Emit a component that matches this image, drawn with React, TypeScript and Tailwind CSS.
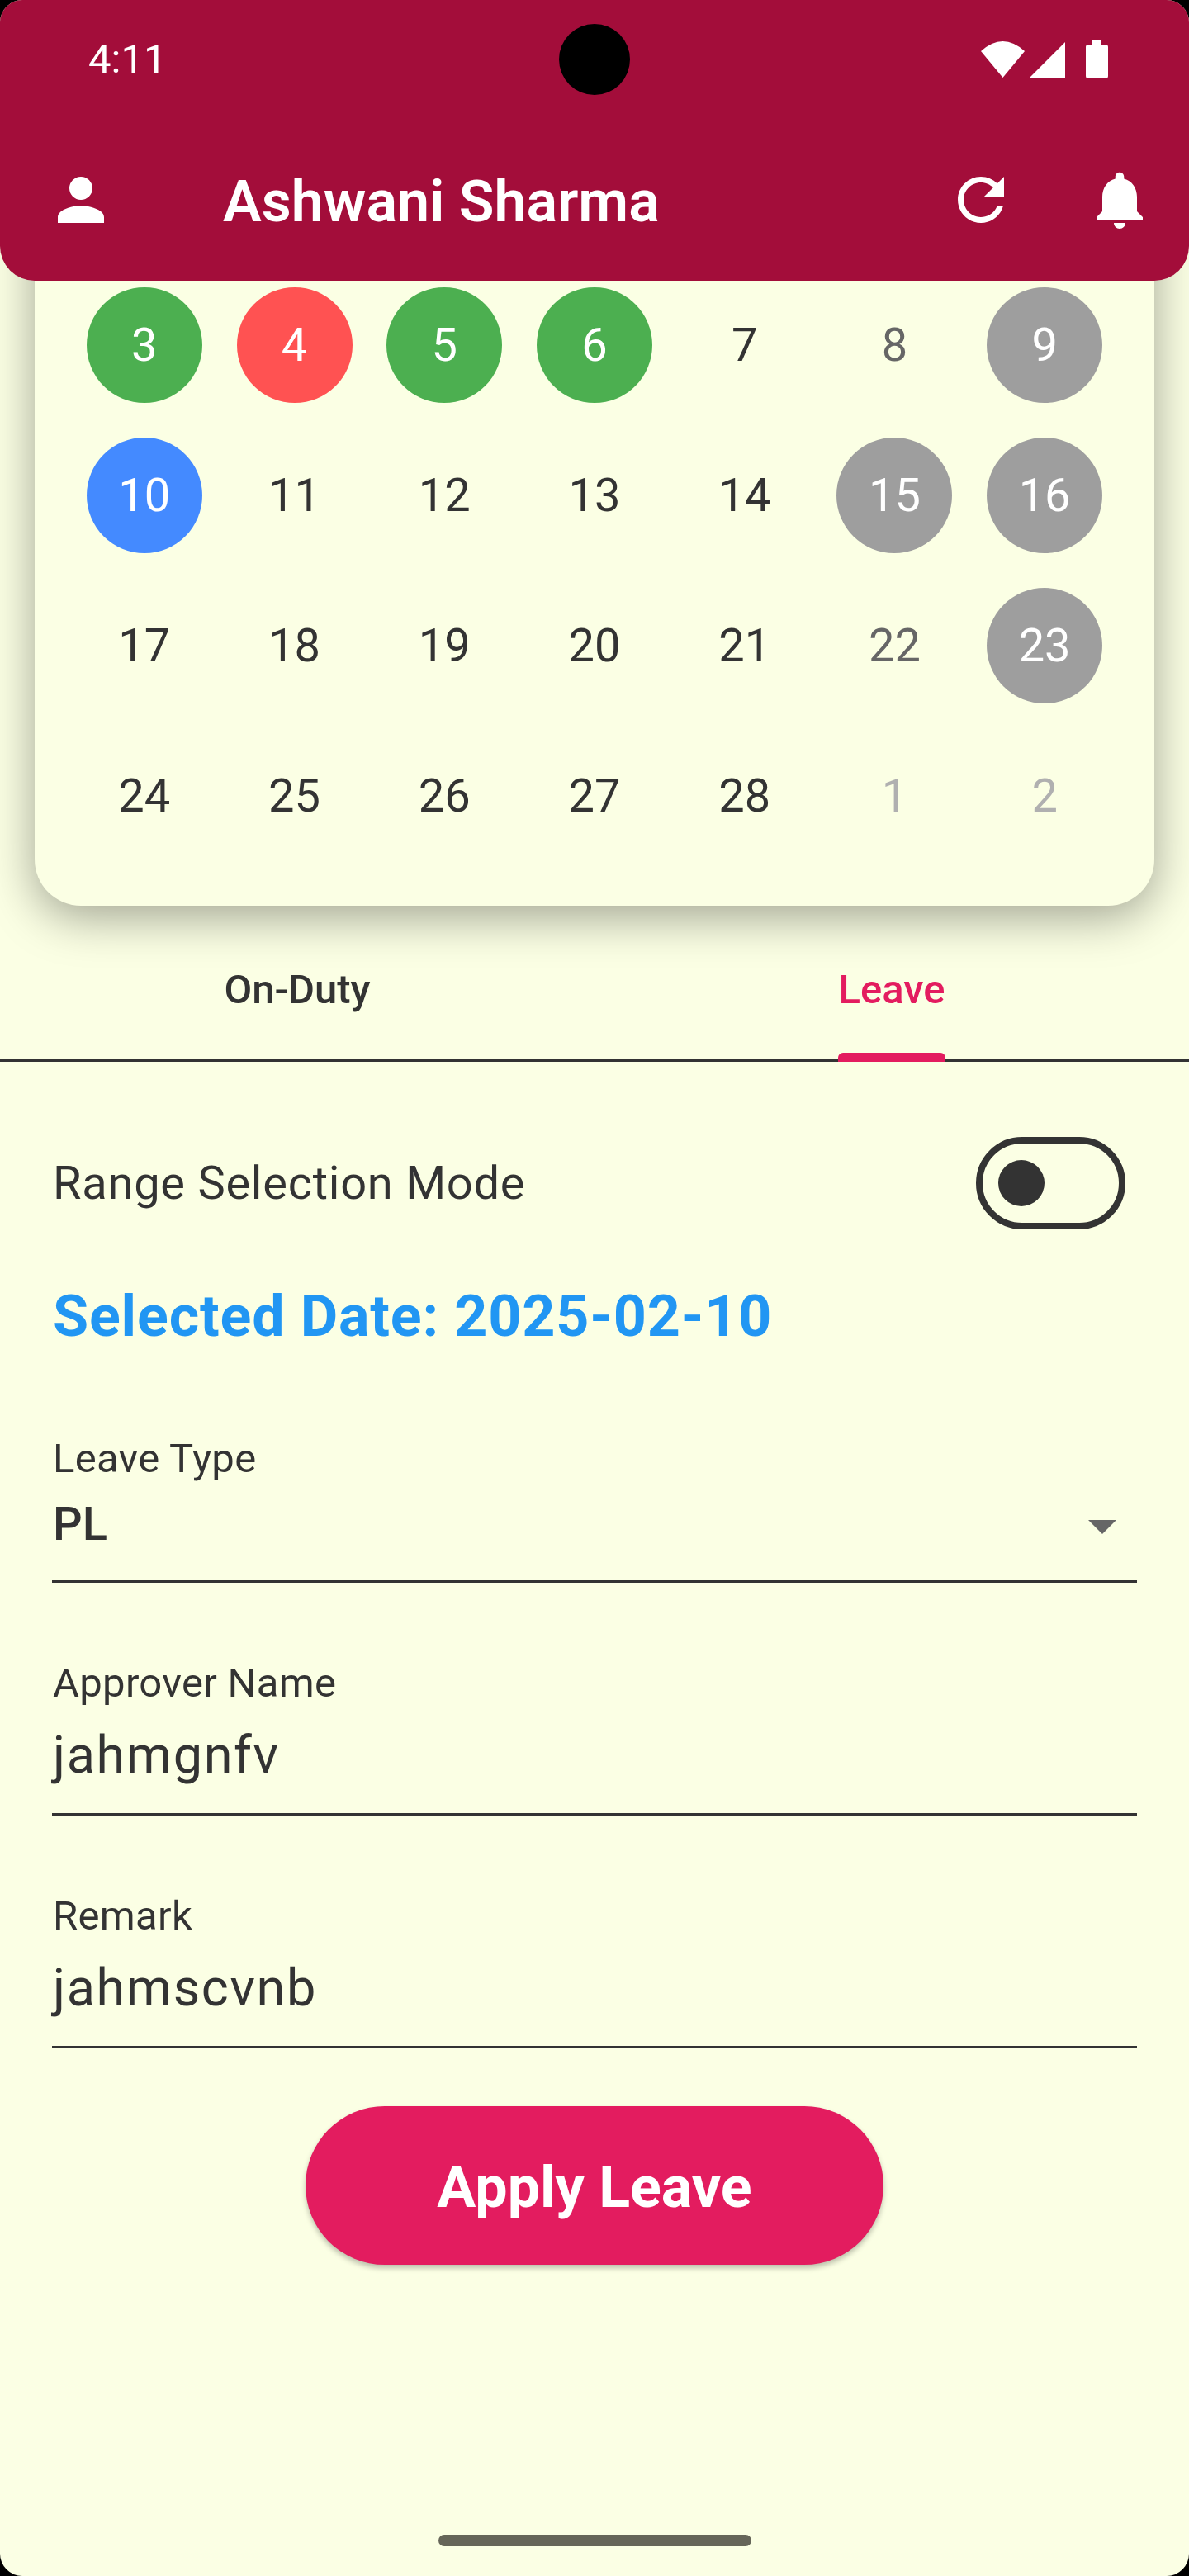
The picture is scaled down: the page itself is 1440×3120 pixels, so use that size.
import React from 'react';

const calendarRows = [
  [
    { day: 3, bg: 'bg-[#4caf50]' },
    { day: 4, bg: 'bg-[#ff5252]' },
    { day: 5, bg: 'bg-[#4caf50]' },
    { day: 6, bg: 'bg-[#4caf50]' },
    { day: 7 },
    { day: 8, weekend: true },
    { day: 9, bg: 'bg-[#9e9e9e]' },
  ],
  [
    { day: 10, bg: 'bg-[#448aff]' },
    { day: 11 },
    { day: 12 },
    { day: 13 },
    { day: 14 },
    { day: 15, bg: 'bg-[#9e9e9e]' },
    { day: 16, bg: 'bg-[#9e9e9e]' },
  ],
  [
    { day: 17 },
    { day: 18 },
    { day: 19 },
    { day: 20 },
    { day: 21 },
    { day: 22, weekend: true },
    { day: 23, bg: 'bg-[#9e9e9e]' },
  ],
  [
    { day: 24 },
    { day: 25 },
    { day: 26 },
    { day: 27 },
    { day: 28 },
    { day: 1, outside: true },
    { day: 2, outside: true },
  ],
];

const Field = ({ label, value }: { label: string; value: string }) => (
  <div className="ml-[63px] w-[1314px] pl-[1px] pt-[94px] pb-[34px] border-b-[3px] border-[#333333]">
    <div className="text-[49px] leading-[56px] text-[#333333] tracking-[0.3px]">{label}</div>
    <div className="text-[63px] leading-[72px] mt-[23px] text-[#333333] tracking-[1.6px]">{value}</div>
  </div>
);

export default function App() {
  return (
    <div className="relative w-[1440px] h-[3120px] overflow-hidden bg-black font-['Roboto',sans-serif]">
      <div className="h-full w-full rounded-[27px] overflow-hidden bg-[#fbffe4]">
        {/* calendar card, top hidden under the app bar */}
        <div className="mx-[42px] h-[1097px] rounded-b-[56px] bg-[#fbffe4] shadow-[0_14px_56px_rgba(0,0,0,0.36)] px-[42px] pt-[327px]">
          {calendarRows.map((row, i) => (
            <div key={i} className="grid grid-cols-7 h-[182px]">
              {row.map((cell, j) => (
                <div key={j} className="flex items-center justify-center">
                  <div
                    className={`w-[140px] h-[140px] rounded-full flex items-center justify-center text-[56px] leading-[64px] ${
                      cell.bg ? `${cell.bg} text-white` : cell.outside ? 'text-[#b0b0b0]' : cell.weekend ? 'text-[#666666]' : 'text-[#333333]'
                    }`}
                  >
                    {cell.day}
                  </div>
                </div>
              ))}
            </div>
          ))}
        </div>

        {/* tabs */}
        <div className="h-[189px] border-b-[3px] border-[#333333] grid grid-cols-2 text-[49px] leading-[56px] font-medium">
          <div className="flex justify-center">
            <span className="pt-[74px] text-[#333333]">On-Duty</span>
          </div>
          <div className="flex justify-center">
            <span className="relative pt-[74px] text-[#e31c5f]">
              Leave
              <span className="absolute inset-x-0 bottom-[-3px] h-[11px] rounded-t-[6px] bg-[#e31c5f]" />
            </span>
          </div>
        </div>

        <div className="flex items-center justify-between pl-[64px] pr-[77px] mt-[91px]">
          <span className="text-[56px] leading-[64px] text-[#333333] tracking-[0.75px]">Range Selection Mode</span>
          <div className="w-[181px] h-[112px] rounded-full border-[8px] border-[#333333] flex items-center pl-[19px]">
            <div className="w-[56px] h-[56px] rounded-full bg-[#333333]" />
          </div>
        </div>

        <div className="mt-[63px] ml-[64px] text-[70px] leading-[84px] font-bold text-[#2196f3] tracking-[0.85px]">Selected Date: 2025-02-10</div>

        <div className="relative ml-[63px] w-[1314px] pl-[1px] mt-[103px] pb-[36px] border-b-[3px] border-[#333333]">
          <div className="text-[49px] leading-[56px] text-[#333333] tracking-[0.3px]">Leave Type</div>
          <div className="text-[56px] font-medium leading-[64px] mt-[19px] text-[#333333]">PL</div>
          <div className="absolute right-[25px] top-[102px] w-0 h-0 border-x-[17px] border-x-transparent border-t-[17px] border-t-[#666666]" />
        </div>

        <Field label="Approver Name" value="jahmgnfv" />
        <Field label="Remark" value="jahmscvnb" />

        <div className="flex justify-center mt-[70px]">
          <button className="w-[700px] h-[192px] pt-[5px] rounded-full bg-[#e31c5f] text-white text-[70px] font-bold shadow-[0_4px_6px_rgba(0,0,0,0.25)]">
            Apply Leave
          </button>
        </div>
      </div>

      {/* app bar with status bar, sits over the scrolled calendar */}
      <div className="absolute inset-x-0 top-0 h-[340px] rounded-t-[27px] rounded-b-[42px] bg-[#a30d3a] text-white pt-[44px]">
        <div className="flex items-start pl-[107px] pr-[98px] h-[56px]">
          <span className="text-[49px] leading-[56px]">4:11</span>
          <svg className="ml-auto mt-[5px]" width="154" height="46" viewBox="0 0 154 46" fill="white">
            <path d="M0 13 Q26.500 -11 53 13 L26.500 45 Z" />
            <path d="M58 46 L102 2 L102 46 Z" />
            <path d="M135 0 H146 V5 H151 Q154 5 154 8 V43 Q154 46 151 46 H130 Q127 46 127 43 V8 Q127 5 130 5 H135 Z" />
          </svg>
        </div>
        <div className="absolute left-[677px] top-[29px] w-[86px] h-[86px] rounded-full bg-black" />
        <div className="flex items-start mt-[100px] pl-[56px] pr-[42px]">
          <svg width="84" height="84" viewBox="0 0 24 24" fill="white">
            <path d="M12 12c2.210 0 4-1.790 4-4s-1.790-4-4-4-4 1.790-4 4 1.790 4 4 4zm0 2c-2.670 0-8 1.340-8 4v2h16v-2c0-2.660-5.330-4-8-4z" />
          </svg>
          <div className="ml-[130px] mt-[2px] flex-1 text-[70px] leading-[84px] font-semibold">Ashwani Sharma</div>
          <svg width="84" height="84" viewBox="0 0 24 24" fill="white">
            <path d="M17.650 6.350C16.200 4.900 14.210 4 12 4c-4.420 0-7.990 3.580-7.990 8s3.570 8 7.990 8c3.730 0 6.840-2.550 7.730-6h-2.080c-.820 2.330-3.040 4-5.650 4-3.310 0-6-2.690-6-6s2.690-6 6-6c1.660 0 3.140.690 4.220 1.780L13 11h7V4l-2.350 2.350z" />
          </svg>
          <svg className="ml-[84px]" width="84" height="84" viewBox="0 0 24 24" fill="white">
            <path d="M12 22c1.100 0 2-.9 2-2h-4c0 1.100.9 2 2 2zm6-6v-5c0-3.070-1.630-5.640-4.500-6.320V4c0-.83-.67-1.500-1.500-1.500s-1.500.67-1.500 1.500v.68C7.640 5.360 6 7.920 6 11v5l-2 2v1h16v-1l-2-2z" />
          </svg>
        </div>
      </div>

      <div className="absolute inset-x-0 bottom-[36px] mx-auto w-[379px] h-[14px] rounded-full bg-[#666659]" />
    </div>
  );
}
